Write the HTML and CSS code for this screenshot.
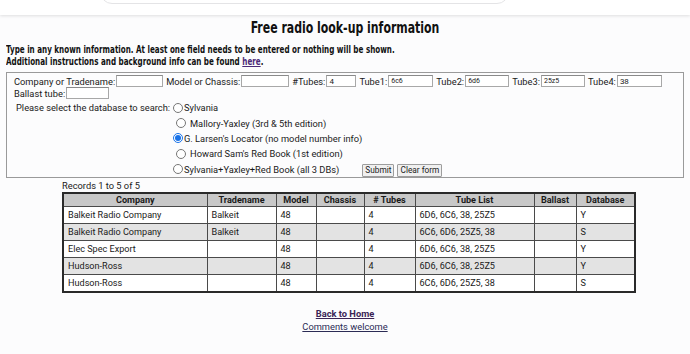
FILE: index.html
```html
<!DOCTYPE html>
<html>
<head>
<meta charset="utf-8">
<link rel="stylesheet" href="styles.css">
</head>
<body>
<header class="topbar"><div class="pill"></div></header>
<main class="page">
  <h1 class="title">Free radio look-up information</h1>
  <p class="intro">Type in any known information. At least one field needs to be entered or nothing will be shown.<br>Additional instructions and background info can be found <a href="#" class="visited">here</a>.</p>
  <form class="search">
    <div class="row">
      <label>Company or Tradename:</label><input class="w47" type="text">
      <label>Model or Chassis:</label><input class="w48" type="text">
      <label>#Tubes:</label><input class="w30" type="text" value="4">
      <label>Tube1:</label><input class="w45 small" type="text" value="6c6">
      <label>Tube2:</label><input class="w44 small" type="text" value="6d6">
      <label>Tube3:</label><input class="w44 small" type="text" value="25z5">
      <label>Tube4:</label><input class="w45" type="text" value="38">
    </div>
    <div class="row">
      <label>Ballast tube:</label><input class="w43" type="text">
    </div>
    <div class="db">
      <span class="db-label">Please select the database to search:</span>
      <div class="radios">
        <label class="opt"><input type="radio" name="db">Sylvania</label>
        <label class="opt indent"><input type="radio" name="db">Mallory-Yaxley (3rd &amp; 5th edition)</label>
        <label class="opt"><input type="radio" name="db" checked>G. Larsen's Locator (no model number info)</label>
        <label class="opt indent"><input type="radio" name="db">Howard Sam's Red Book (1st edition)</label>
        <label class="opt"><input type="radio" name="db">Sylvania+Yaxley+Red Book (all 3 DBs)</label>
      </div>
      <div class="buttons">
        <button type="button">Submit</button><button type="button">Clear form</button>
      </div>
    </div>
  </form>
  <section class="results">
    <div class="count">Records 1 to 5 of 5</div>
    <table class="grid">
      <colgroup>
        <col class="c-company"><col class="c-trade"><col class="c-model"><col class="c-chassis"><col class="c-tubes"><col class="c-list"><col class="c-ballast"><col class="c-db">
      </colgroup>
      <thead>
        <tr><th>Company</th><th>Tradename</th><th>Model</th><th>Chassis</th><th># Tubes</th><th>Tube List</th><th>Ballast</th><th>Database</th></tr>
      </thead>
      <tbody>
        <tr><td>Balkeit Radio Company</td><td>Balkeit</td><td>48</td><td></td><td>4</td><td>6D6, 6C6, 38, 25Z5</td><td></td><td>Y</td></tr>
        <tr class="alt"><td>Balkeit Radio Company</td><td>Balkeit</td><td>48</td><td></td><td>4</td><td>6C6, 6D6, 25Z5, 38</td><td></td><td>S</td></tr>
        <tr><td>Elec Spec Export</td><td></td><td>48</td><td></td><td>4</td><td>6D6, 6C6, 38, 25Z5</td><td></td><td>Y</td></tr>
        <tr class="alt"><td>Hudson-Ross</td><td></td><td>48</td><td></td><td>4</td><td>6D6, 6C6, 38, 25Z5</td><td></td><td>Y</td></tr>
        <tr><td>Hudson-Ross</td><td></td><td>48</td><td></td><td>4</td><td>6C6, 6D6, 25Z5, 38</td><td></td><td>S</td></tr>
      </tbody>
    </table>
  </section>
  <nav class="links">
    <a href="#" class="home">Back to Home</a>
    <a href="#" class="comments">Comments welcome</a>
  </nav>
</main>
</body>
</html>
```
FILE: styles.css
```css
html, body {
  margin: 0;
  padding: 0;
  background: #fcfcfd;
  font-family: Roboto, "Liberation Sans", sans-serif;
  color: #1a1a1a;
}
.topbar {
  height: 15px;
  background: #ffffff;
  box-shadow: 0 1px 3px rgba(0,0,0,0.12);
  position: relative;
  overflow: hidden;
}
.pill {
  position: absolute;
  left: 100px;
  width: 407px;
  top: -20px;
  height: 22px;
  border: 1px solid #e4e4e6;
  border-radius: 12px;
  background: #fff;
}
.page {
  padding: 0 6px;
}
.title {
  margin: 3px 0 0;
  text-align: center;
  font-family: "Liberation Sans Narrow", "DejaVu Sans Condensed", Roboto, sans-serif;
  font-weight: bold;
  font-size: 16px;
  line-height: 20px;
  color: #111;
  white-space: nowrap;
  transform: scaleX(0.76);
  transform-origin: center;
}
.intro {
  margin: 5px 0 0;
  font-family: "Liberation Sans Narrow", "DejaVu Sans Condensed", Roboto, sans-serif;
  font-weight: bold;
  font-size: 10.5px;
  line-height: 12px;
  color: #111;
  white-space: nowrap;
  transform: scaleX(0.76);
  transform-origin: left center;
}
.intro a { color: #4b2a78; }
.search {
  margin-top: 5px;
  border: 1px solid #9a9a9a;
  padding: 2px 7px 1px 7px;
  font-size: 9.3px;
  height: 101px;
  box-sizing: content-box;
}
.row {
  display: flex;
  align-items: center;
  height: 12px;
}
.row label { white-space: nowrap; }
.row input {
  height: 12px;
  box-sizing: border-box;
  margin: 0 3px 0 1px;
  padding: 0 2px;
  border: 1px solid #a8a8a8;
  border-top-color: #8a8a8a;
  background: #fff;
  font-family: Roboto, sans-serif;
  font-size: 8px;
  color: #222;
  outline: none;
}
.row input.small { font-size: 7px; }
.w30 { width: 30px; }
.w43 { width: 43px; }
.w44 { width: 44px; }
.w45 { width: 45px; }
.w47 { width: 47px; }
.w48 { width: 48px; }
.db {
  display: flex;
  margin-top: 1px;
  padding-left: 2px;
}
.db-label {
  margin-top: 2px;
  width: 157px;
  flex: none;
  white-space: nowrap;
}
.radios {
  display: flex;
  flex-direction: column;
}
.opt {
  display: flex;
  align-items: center;
  height: 15.4px;
  white-space: nowrap;
}
.opt input {
  width: 10px;
  height: 10px;
  margin: 0 1px 0 0;
  accent-color: #1a73e8;
}
.opt.indent input { margin: 0 4px 0 3px; }
.buttons {
  display: flex;
  align-items: flex-end;
  gap: 3px;
  margin-left: 0;
  padding-bottom: 0;
}
.buttons button {
  height: 13px;
  padding: 0 2px;
  font-family: Roboto, sans-serif;
  font-size: 8.3px;
  line-height: 11px;
  color: #222;
  background: #f0f0f0;
  border: 1px solid #9d9d9d;
  border-radius: 1px;
}
.results {
  margin-left: 56px;
  margin-top: 2px;
  width: 574px;
}
.count {
  font-size: 9.3px;
  line-height: 12px;
}
.grid {
  border-collapse: collapse;
  table-layout: fixed;
  width: 574px;
  border: 2px solid #2a2a2a;
  font-size: 9.1px;
}
.c-company { width: 144px; }
.c-trade { width: 69px; }
.c-model { width: 40px; }
.c-chassis { width: 48px; }
.c-tubes { width: 51px; }
.c-list { width: 119px; }
.c-ballast { width: 42px; }
.c-db { width: 59px; }
.grid th, .grid td {
  border: 1px solid #4a4a4a;
  padding: 0 4px;
  white-space: nowrap;
  overflow: hidden;
}
.grid th {
  background: #c8c8c8;
  font-weight: bold;
  text-align: center;
  height: 12px;
  line-height: 12px;
}
.grid td {
  height: 16px;
  line-height: 16px;
  text-align: left;
  background: #fff;
}
.grid tr.alt td { background: #e3e3e3; }
.links {
  display: flex;
  flex-direction: column;
  align-items: center;
  margin-top: 15px;
  font-size: 9.3px;
  line-height: 12.5px;
}
.links a { color: #2b2b55; }
.links .home { font-weight: bold; color: #3b2455; }
```
